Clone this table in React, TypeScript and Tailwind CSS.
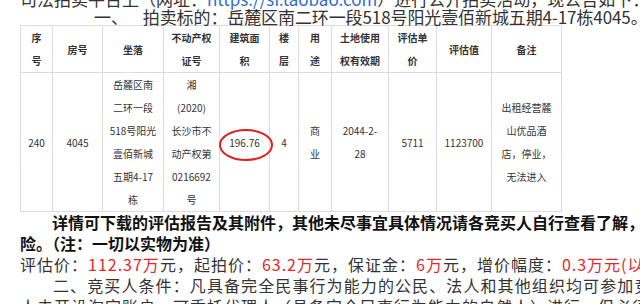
const headers: string[][] = [
  ["序", "号"],
  ["房号"],
  ["坐落"],
  ["不动产权", "证号"],
  ["建筑面", "积"],
  ["楼", "层"],
  ["用", "途"],
  ["土地使用", "权有效期"],
  ["评估单", "价"],
  ["评估值"],
  ["备注"],
];

const row: string[][] = [
  ["240"],
  ["4045"],
  ["岳麓区南", "二环一段", "518号阳光", "壹佰新城", "五期4-17", "栋"],
  ["湘", "(2020)", "长沙市不", "动产权第", "0216692", "号"],
  ["196.76"],
  ["4"],
  ["商", "业"],
  ["2044-2-", "28"],
  ["5711"],
  ["1123700"],
  ["出租经营麓", "山优品酒", "店，停业，", "无法进入"],
];

const widths = [32, 50, 61, 56, 50, 29, 33, 57, 48, 55, 70];

const Lines = ({ lines }: { lines: string[] }) => (
  <>
    {lines.map((l, i) => (
      <div key={i}>{l}</div>
    ))}
  </>
);

export default function App() {
  return (
    <div className="w-[640px] h-[304px] overflow-hidden bg-white font-['Noto_Sans_CJK_SC','Liberation_Sans',sans-serif] text-[#333]">
      {/* heading lines, first one cut by the top edge */}
      <div className="-mt-[10px] text-[17px] leading-[18px] whitespace-nowrap">
        <div className="pl-[20px]">
          司法拍卖平台上（网址：
          <span className="text-[#2f6bd0]">https://sf.taobao.com</span>
          ）进行公开拍卖活动，现公告如下：
        </div>
        <div className="pl-[94px] tracking-[-0.1px]">
          一、<span className="ml-[15px]">拍卖标的：岳麓区南二环一段518号阳光壹佰新城五期4-17栋4045。</span>
        </div>
      </div>

      <table className="ml-[20px] -mt-[1px] w-[542px] table-fixed border-collapse text-[10px] leading-[23px] text-[#333]">
        <colgroup>
          {widths.map((w, i) => (
            <col key={i} style={{ width: w }} />
          ))}
        </colgroup>
        <tbody>
          <tr>
            {headers.map((h, i) => (
              <td key={i} className="border border-[#dcdcdc] p-0 text-center align-middle font-bold">
                <Lines lines={h} />
              </td>
            ))}
          </tr>
          <tr className="h-[138px]">
            {row.map((c, i) => (
              <td key={i} className="border border-[#dcdcdc] p-0 text-center align-middle">
                {i === 4 ? (
                  <div className="relative">
                    {c[0]}
                    <svg
                      className="absolute left-[-3px] top-[-3px] w-[58px] h-[36px]"
                      viewBox="0 0 58 36"
                    >
                      <ellipse cx="29" cy="17" rx="26" ry="15" fill="none" stroke="#e0201f" strokeWidth="2" />
                    </svg>
                  </div>
                ) : (
                  <Lines lines={c} />
                )}
              </td>
            ))}
          </tr>
        </tbody>
      </table>

      <div className="text-[16px] leading-[21px] whitespace-nowrap">
        <div className="pl-[52px] font-bold text-[#111]">
          详情可下载的评估报告及其附件，其他未尽事宜具体情况请各竞买人自行查看了解，风
        </div>
        <div className="pl-[20px] font-bold text-[#111]">险。（注：一切以实物为准）</div>
        <div className="pl-[20px] tracking-[1px]">
          评估价：<span className="text-[#e5262b]">112.37万</span>元，起拍价：
          <span className="text-[#e5262b]">63.2万</span>元，保证金：
          <span className="text-[#e5262b]">6万</span>元，增价幅度：
          <span className="text-[#e5262b]">0.3万元(以人民币为单位)</span>
        </div>
        <div className="pl-[53px] tracking-[1.1px]">
          二、竞买人条件：凡具备完全民事行为能力的公民、法人和其他组织均可参加竞买。
        </div>
        <div className="pl-[20px] tracking-[1px]">
          人未开设淘宝账户，可委托代理人（具备完全民事行为能力的自然人）进行，但必须在竞买前
        </div>
      </div>
    </div>
  );
}
